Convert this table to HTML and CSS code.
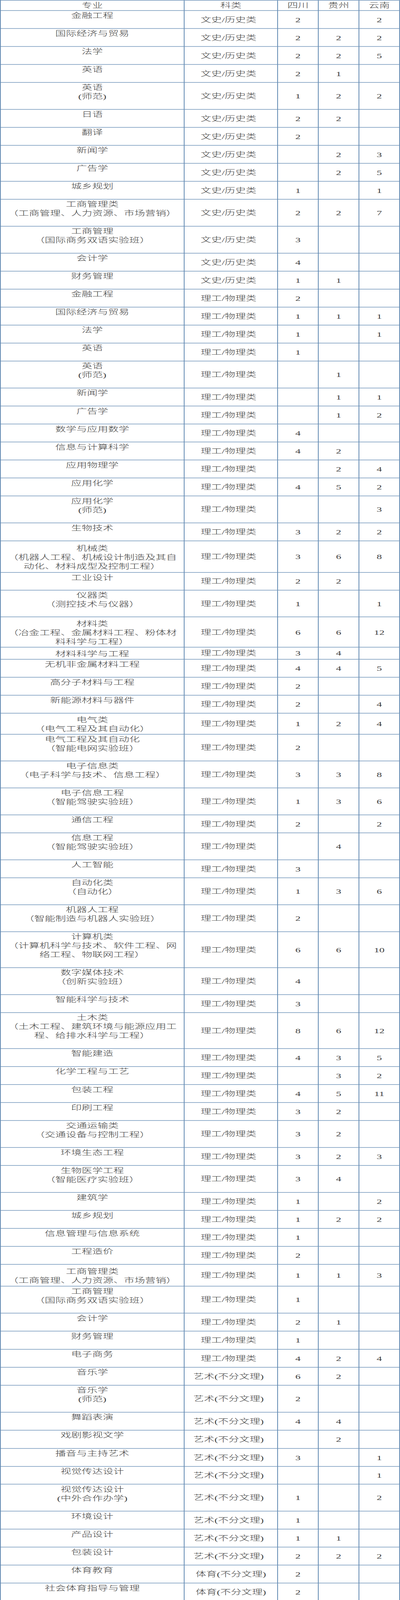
FILE: index.html
```html
<!DOCTYPE html>
<html lang="zh-CN">
<head>
<meta charset="utf-8">
<title>招生计划</title>
<link rel="stylesheet" href="styles.css">
</head>
<body>
<div class="page">
<table class="plan">
<thead>
<tr class="hd"><th class="m">专业</th><th class="k">科类</th><th class="n">四川</th><th class="n">贵州</th><th class="n">云南</th></tr>
</thead>
<tbody>
<tr class="r70"><td class="m">金融工程</td><td class="k">文史/历史类</td><td class="n">2</td><td class="n"></td><td class="n">2</td></tr>
<tr class="r70"><td class="m">国际经济与贸易</td><td class="k">文史/历史类</td><td class="n">2</td><td class="n">2</td><td class="n">2</td></tr>
<tr class="r70"><td class="m">法学</td><td class="k">文史/历史类</td><td class="n">2</td><td class="n">2</td><td class="n">5</td></tr>
<tr class="r70"><td class="m">英语</td><td class="k">文史/历史类</td><td class="n">2</td><td class="n">1</td><td class="n"></td></tr>
<tr class="r105"><td class="m">英语<br>(师范)</td><td class="k">文史/历史类</td><td class="n">1</td><td class="n">2</td><td class="n">2</td></tr>
<tr class="r70"><td class="m">日语</td><td class="k">文史/历史类</td><td class="n">2</td><td class="n">2</td><td class="n"></td></tr>
<tr class="r70"><td class="m">翻译</td><td class="k">文史/历史类</td><td class="n">2</td><td class="n"></td><td class="n"></td></tr>
<tr class="r70"><td class="m">新闻学</td><td class="k">文史/历史类</td><td class="n"></td><td class="n">2</td><td class="n">3</td></tr>
<tr class="r70"><td class="m">广告学</td><td class="k">文史/历史类</td><td class="n"></td><td class="n">2</td><td class="n">5</td></tr>
<tr class="r70"><td class="m">城乡规划</td><td class="k">文史/历史类</td><td class="n">1</td><td class="n"></td><td class="n">1</td></tr>
<tr class="r105"><td class="m">工商管理类<br>（工商管理、人力资源、市场营销）</td><td class="k">文史/历史类</td><td class="n">2</td><td class="n">2</td><td class="n">7</td></tr>
<tr class="r105"><td class="m">工商管理<br>（国际商务双语实验班）</td><td class="k">文史/历史类</td><td class="n">3</td><td class="n"></td><td class="n"></td></tr>
<tr class="r70"><td class="m">会计学</td><td class="k">文史/历史类</td><td class="n">4</td><td class="n"></td><td class="n"></td></tr>
<tr class="r70"><td class="m">财务管理</td><td class="k">文史/历史类</td><td class="n">1</td><td class="n">1</td><td class="n"></td></tr>
<tr class="r70"><td class="m">金融工程</td><td class="k">理工/物理类</td><td class="n">2</td><td class="n"></td><td class="n"></td></tr>
<tr class="r70"><td class="m">国际经济与贸易</td><td class="k">理工/物理类</td><td class="n">1</td><td class="n">1</td><td class="n">1</td></tr>
<tr class="r70"><td class="m">法学</td><td class="k">理工/物理类</td><td class="n">1</td><td class="n"></td><td class="n">1</td></tr>
<tr class="r70"><td class="m">英语</td><td class="k">理工/物理类</td><td class="n">1</td><td class="n"></td><td class="n"></td></tr>
<tr class="r105"><td class="m">英语<br>(师范)</td><td class="k">理工/物理类</td><td class="n"></td><td class="n">1</td><td class="n"></td></tr>
<tr class="r70"><td class="m">新闻学</td><td class="k">理工/物理类</td><td class="n"></td><td class="n">1</td><td class="n">1</td></tr>
<tr class="r70"><td class="m">广告学</td><td class="k">理工/物理类</td><td class="n"></td><td class="n">1</td><td class="n">2</td></tr>
<tr class="r70"><td class="m">数学与应用数学</td><td class="k">理工/物理类</td><td class="n">4</td><td class="n"></td><td class="n"></td></tr>
<tr class="r70"><td class="m">信息与计算科学</td><td class="k">理工/物理类</td><td class="n">4</td><td class="n">2</td><td class="n"></td></tr>
<tr class="r70"><td class="m">应用物理学</td><td class="k">理工/物理类</td><td class="n"></td><td class="n">2</td><td class="n">4</td></tr>
<tr class="r70"><td class="m">应用化学</td><td class="k">理工/物理类</td><td class="n">4</td><td class="n">5</td><td class="n">2</td></tr>
<tr class="r105"><td class="m">应用化学<br>(师范)</td><td class="k">理工/物理类</td><td class="n"></td><td class="n"></td><td class="n">3</td></tr>
<tr class="r70"><td class="m">生物技术</td><td class="k">理工/物理类</td><td class="n">3</td><td class="n">2</td><td class="n">2</td></tr>
<tr class="r123 c"><td class="m">机械类<br>（机器人工程、机械设计制造及其自<br>动化、材料成型及控制工程）</td><td class="k">理工/物理类</td><td class="n">3</td><td class="n">6</td><td class="n">8</td></tr>
<tr class="r69"><td class="m">工业设计</td><td class="k">理工/物理类</td><td class="n">2</td><td class="n">2</td><td class="n"></td></tr>
<tr class="r104"><td class="m">仪器类<br>（测控技术与仪器）</td><td class="k">理工/物理类</td><td class="n">1</td><td class="n"></td><td class="n">1</td></tr>
<tr class="r118 c"><td class="m">材料类<br>（冶金工程、金属材料工程、粉体材<br>料科学与工程）</td><td class="k">理工/物理类</td><td class="n">6</td><td class="n">6</td><td class="n">12</td></tr>
<tr class="r47 c"><td class="m">材料科学与工程</td><td class="k">理工/物理类</td><td class="n">3</td><td class="n">4</td><td class="n"></td></tr>
<tr class="r70"><td class="m">无机非金属材料工程</td><td class="k">理工/物理类</td><td class="n">4</td><td class="n">4</td><td class="n">5</td></tr>
<tr class="r70"><td class="m">高分子材料与工程</td><td class="k">理工/物理类</td><td class="n">2</td><td class="n"></td><td class="n"></td></tr>
<tr class="r70"><td class="m">新能源材料与器件</td><td class="k">理工/物理类</td><td class="n">2</td><td class="n"></td><td class="n">4</td></tr>
<tr class="r82 c"><td class="m">电气类<br>（电气工程及其自动化）</td><td class="k">理工/物理类</td><td class="n">1</td><td class="n">2</td><td class="n">4</td></tr>
<tr class="r104"><td class="m">电气工程及其自动化<br>（智能电网实验班）</td><td class="k">理工/物理类</td><td class="n">2</td><td class="n"></td><td class="n"></td></tr>
<tr class="r105"><td class="m">电子信息类<br>（电子科学与技术、信息工程）</td><td class="k">理工/物理类</td><td class="n">3</td><td class="n">3</td><td class="n">8</td></tr>
<tr class="r105"><td class="m">电子信息工程<br>（智能驾驶实验班）</td><td class="k">理工/物理类</td><td class="n">1</td><td class="n">3</td><td class="n">6</td></tr>
<tr class="r70"><td class="m">通信工程</td><td class="k">理工/物理类</td><td class="n">2</td><td class="n"></td><td class="n">2</td></tr>
<tr class="r105"><td class="m">信息工程<br>（智能驾驶实验班）</td><td class="k">理工/物理类</td><td class="n"></td><td class="n">4</td><td class="n"></td></tr>
<tr class="r70"><td class="m">人工智能</td><td class="k">理工/物理类</td><td class="n">3</td><td class="n"></td><td class="n"></td></tr>
<tr class="r105"><td class="m">自动化类<br>（自动化）</td><td class="k">理工/物理类</td><td class="n">1</td><td class="n">3</td><td class="n">6</td></tr>
<tr class="r105"><td class="m">机器人工程<br>（智能制造与机器人实验班）</td><td class="k">理工/物理类</td><td class="n">2</td><td class="n"></td><td class="n"></td></tr>
<tr class="r140"><td class="m">计算机类<br>（计算机科学与技术、软件工程、网<br>络工程、物联网工程）</td><td class="k">理工/物理类</td><td class="n">6</td><td class="n">6</td><td class="n">10</td></tr>
<tr class="r105"><td class="m">数字媒体技术<br>（创新实验班）</td><td class="k">理工/物理类</td><td class="n">4</td><td class="n"></td><td class="n"></td></tr>
<tr class="r70"><td class="m">智能科学与技术</td><td class="k">理工/物理类</td><td class="n">3</td><td class="n"></td><td class="n"></td></tr>
<tr class="r140"><td class="m">土木类<br>（土木工程、建筑环境与能源应用工<br>程、给排水科学与工程）</td><td class="k">理工/物理类</td><td class="n">8</td><td class="n">6</td><td class="n">12</td></tr>
<tr class="r70"><td class="m">智能建造</td><td class="k">理工/物理类</td><td class="n">4</td><td class="n">3</td><td class="n">5</td></tr>
<tr class="r70"><td class="m">化学工程与工艺</td><td class="k">理工/物理类</td><td class="n"></td><td class="n">3</td><td class="n">2</td></tr>
<tr class="r70"><td class="m">包装工程</td><td class="k">理工/物理类</td><td class="n">4</td><td class="n">5</td><td class="n">11</td></tr>
<tr class="r70"><td class="m">印刷工程</td><td class="k">理工/物理类</td><td class="n">3</td><td class="n">2</td><td class="n"></td></tr>
<tr class="r105"><td class="m">交通运输类<br>（交通设备与控制工程）</td><td class="k">理工/物理类</td><td class="n">3</td><td class="n">2</td><td class="n"></td></tr>
<tr class="r70"><td class="m">环境生态工程</td><td class="k">理工/物理类</td><td class="n">3</td><td class="n">2</td><td class="n">3</td></tr>
<tr class="r105"><td class="m">生物医学工程<br>（智能医疗实验班）</td><td class="k">理工/物理类</td><td class="n">3</td><td class="n">4</td><td class="n"></td></tr>
<tr class="r70"><td class="m">建筑学</td><td class="k">理工/物理类</td><td class="n">1</td><td class="n"></td><td class="n">2</td></tr>
<tr class="r70"><td class="m">城乡规划</td><td class="k">理工/物理类</td><td class="n">1</td><td class="n">2</td><td class="n">2</td></tr>
<tr class="r70"><td class="m">信息管理与信息系统</td><td class="k">理工/物理类</td><td class="n">1</td><td class="n"></td><td class="n"></td></tr>
<tr class="r70"><td class="m">工程造价</td><td class="k">理工/物理类</td><td class="n">2</td><td class="n"></td><td class="n"></td></tr>
<tr class="r85 c"><td class="m">工商管理类<br>（工商管理、人力资源、市场营销）</td><td class="k">理工/物理类</td><td class="n">1</td><td class="n">1</td><td class="n">3</td></tr>
<tr class="r105"><td class="m">工商管理<br>（国际商务双语实验班）</td><td class="k">理工/物理类</td><td class="n">1</td><td class="n"></td><td class="n"></td></tr>
<tr class="r70"><td class="m">会计学</td><td class="k">理工/物理类</td><td class="n">2</td><td class="n">1</td><td class="n"></td></tr>
<tr class="r71"><td class="m">财务管理</td><td class="k">理工/物理类</td><td class="n">1</td><td class="n"></td><td class="n"></td></tr>
<tr class="r70"><td class="m">电子商务</td><td class="k">理工/物理类</td><td class="n">4</td><td class="n">2</td><td class="n">4</td></tr>
<tr class="r70"><td class="m">音乐学</td><td class="k">艺术(不分文理)</td><td class="n">6</td><td class="n">2</td><td class="n"></td></tr>
<tr class="r105"><td class="m">音乐学<br>(师范)</td><td class="k">艺术(不分文理)</td><td class="n">2</td><td class="n"></td><td class="n"></td></tr>
<tr class="r70"><td class="m">舞蹈表演</td><td class="k">艺术(不分文理)</td><td class="n">4</td><td class="n">4</td><td class="n"></td></tr>
<tr class="r71"><td class="m">戏剧影视文学</td><td class="k">艺术(不分文理)</td><td class="n"></td><td class="n">2</td><td class="n"></td></tr>
<tr class="r70"><td class="m">播音与主持艺术</td><td class="k">艺术(不分文理)</td><td class="n">3</td><td class="n"></td><td class="n">1</td></tr>
<tr class="r69"><td class="m">视觉传达设计</td><td class="k">艺术(不分文理)</td><td class="n"></td><td class="n"></td><td class="n">1</td></tr>
<tr class="r105"><td class="m">视觉传达设计<br>(中外合作办学)</td><td class="k">艺术(不分文理)</td><td class="n">1</td><td class="n"></td><td class="n">2</td></tr>
<tr class="r70"><td class="m">环境设计</td><td class="k">艺术(不分文理)</td><td class="n">1</td><td class="n"></td><td class="n"></td></tr>
<tr class="r70"><td class="m">产品设计</td><td class="k">艺术(不分文理)</td><td class="n">1</td><td class="n">1</td><td class="n"></td></tr>
<tr class="r70"><td class="m">包装设计</td><td class="k">艺术(不分文理)</td><td class="n">2</td><td class="n">2</td><td class="n">2</td></tr>
<tr class="r70"><td class="m">体育教育</td><td class="k ty">体育(不分文理)</td><td class="n">2</td><td class="n"></td><td class="n"></td></tr>
<tr class="r70"><td class="m">社会体育指导与管理</td><td class="k ty">体育(不分文理)</td><td class="n">2</td><td class="n"></td><td class="n"></td></tr>
</tbody>
</table>
</div>
</body>
</html>
```

FILE: styles.css
```css
* {
  box-sizing: border-box;
}

html, body {
  margin: 0;
  padding: 0;
  background: #ffffff;
}

/* The capture viewport is 4096px tall: the full 6229px table is fitted into it vertically. */
.page {
  height: 4096px;
  overflow: hidden;
}

.plan {
  width: 1023px;
  table-layout: fixed;
  border-collapse: separate;
  border-spacing: 0;
  border-top: 2px solid #6189b2;
  border-left: 2px solid #6189b2;
  font-family: "Liberation Serif", "Noto Sans CJK SC", serif;
  font-size: 27px;
  font-weight: 300;
  line-height: 35px;
  color: #3d3d3d;
  transform: scaleY(0.65746);
  transform-origin: 0 0;
}

.plan th,
.plan td {
  border-right: 2px solid #6189b2;
  border-bottom: 2px solid #6189b2;
  padding: 0;
  text-align: center;
  vertical-align: middle;
  white-space: nowrap;
  font-weight: 300;
}

.plan th.m { width: 470px; }
.plan th.k { width: 239px; }
.plan th.n { width: 104px; }

.hd { height: 34px; }
.hd th { padding-top: 3px; }

.plan td.m {
  vertical-align: top;
  padding-top: 2px;
}

.plan tr.c td.m {
  vertical-align: middle;
  padding-top: 6px;
}

.plan td.k {
  padding-top: 2px;
  padding-right: 12px;
}

.plan td.k.ty {
  padding-right: 0;
}

.plan td.n {
  padding-top: 2px;
}

.r47 { height: 47px; }
.r69 { height: 69px; }
.r70 { height: 70px; }
.r71 { height: 71px; }
.r82 { height: 82px; }
.r85 { height: 85px; }
.r104 { height: 104px; }
.r105 { height: 105px; }
.r118 { height: 118px; }
.r123 { height: 123px; }
.r140 { height: 140px; }
```
